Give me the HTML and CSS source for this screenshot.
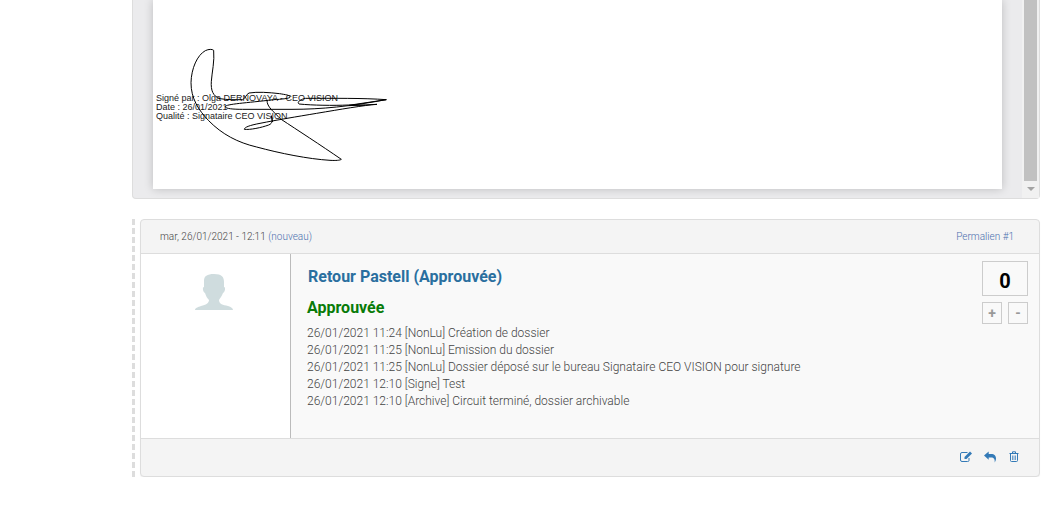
FILE: index.html
```html
<!DOCTYPE html>
<html lang="fr">
<head>
<meta charset="utf-8">
<title>Retour Pastell</title>
<link rel="stylesheet" href="styles.css">
</head>
<body>
<main class="content">
  <section class="viewer" aria-label="Document">
    <div class="stage">
      <div class="sheet">
        <div class="signed">Signé par : Olga DERNOVAYA - CEO VISION<br>Date : 26/01/2021<br>Qualité : Signataire CEO VISION</div>
        <svg class="signature" viewBox="69 45 711 360" aria-hidden="true">
          <path d="M251 61C247 57 236 57 226 62C202 75 184 115 183 158C183 205 205 240 236 272C276 313 324 338 380 351C450 370 535 387 600 391C618 392 630 391 634 388C570 344 505 302 452 267C430 244 411 231 411 211"/>
          <path d="M251 61C254 94 246 126 244 154C242 181 249 199 270 206C290 210 320 209 338 209C348 204 347 194 357 189C383 185 415 187 449 191C466 194 479 195 481 201C480 205 455 208 431 209C350 219 286 222 286 230C286 236 309 238 338 238H486C575 238 660 229 769 209C700 204 610 205 527 205C510 208 500 217 507 222C548 226 608 227 656 225L705 226"/>
          <path d="M769 209L656 226M741 223C700 226 632 238 560 250C500 260 440 270 390 280C358 286 343 292 343 298C360 300 394 293 416 285C430 280 426 268 424 257L428 276M741 223L656 227"/>
        </svg>
      </div>
    </div>
    <div class="scrollbar"><span class="thumb"></span><span class="arrow"></span></div>
  </section>

  <div class="thread">
    <article class="card">
      <header class="card-head">
        <span>mar, 26/01/2021 - 12:11 <a href="#new">(nouveau)</a></span>
        <a href="#comment-1">Permalien #1</a>
      </header>
      <div class="card-body">
        <aside class="author">
          <svg class="avatar" viewBox="0 0 38 37" role="img" aria-label="Avatar"><path d="M19 1C27 1 29 4 29 9V14C31 14 30 19 28 20C27 23 25 25 24 27C24 31 28 32 33 33C36 34 38 35 38 37H0C0 35 3 34 6 33C11 32 14 30 14 27C12 25 11 23 10 20C8 19 7 14 9 14V8C9 3 12 1 19 1Z"/></svg>
        </aside>
        <div class="message">
          <div class="text">
            <h2><a href="#comment-1">Retour Pastell (Approuvée)</a></h2>
            <h3>Approuvée</h3>
            <p>26/01/2021 11:24 [NonLu] Création de dossier<br>26/01/2021 11:25 [NonLu] Emission du dossier<br>26/01/2021 11:25 [NonLu] Dossier déposé sur le bureau Signataire CEO VISION pour signature<br>26/01/2021 12:10 [Signe] Test<br>26/01/2021 12:10 [Archive] Circuit terminé, dossier archivable</p>
          </div>
          <div class="votes">
            <output class="score">0</output>
            <button type="button">+</button>
            <button type="button">-</button>
          </div>
        </div>
      </div>
      <footer class="card-foot">
        <a href="#edit" aria-label="Modifier"><svg viewBox="0 0 12 12"><path class="line" d="M9 7V9.500Q9 10.500 7.500 10.500H2Q.5 10.500 .5 9V3Q.5 1.500 2 1.500H7.500"/><path d="M4.500 6L10 .5L12 2.500L6.500 8H4.500Z"/></svg></a>
        <a href="#reply" aria-label="Répondre"><svg viewBox="0 0 12 12"><path d="M0 4.500L4.700 .5V3H7C10.500 3 12 5 12 7.500C12 9 11.500 10 10.700 11.500C11 8 10 6.500 7 6.500H4.700V8.700Z"/></svg></a>
        <a href="#delete" aria-label="Supprimer"><svg viewBox="0 0 12 12"><path class="line" d="M1.500 2.500H10.500M4.500 2.500V.8H7.500V2.500M2.500 2.500V9.500Q2.500 10.500 3.500 10.500H8.500Q9.500 10.500 9.500 9.500V2.500"/><path class="line bars" d="M4.500 4.500V9M6 4.500V9M7.500 4.500V9"/></svg></a>
      </footer>
    </article>
  </div>
</main>
</body>
</html>
```
FILE: styles.css
```css
* { box-sizing: border-box; }
body {
  margin: 0;
  background: #fff;
  color: #444;
  font: 300 12px/17px Roboto, "Liberation Sans", sans-serif;
}
a { color: #337ab7; text-decoration: none; }
h2, h3, p { margin: 0; }

.content { margin: 0 11px 0 132px; }

.viewer {
  display: flex;
  margin-bottom: 20px;
  background: #ebebed;
  border: 1px solid #ddd;
  border-top: 0;
  border-radius: 0 0 4px 4px;
}
.stage { flex: 1; padding: 0 20px 9px; overflow: hidden; }
.sheet {
  position: relative;
  padding: 94px 0 68px 3px;
  background: #fff;
  box-shadow: 0 0 9px rgba(0, 0, 0, .2);
}
.signed {
  color: #222;
  font: 400 9px/9px "Liberation Sans", sans-serif;
}
.signature {
  position: absolute;
  left: 0;
  top: 45px;
  width: 237px;
  height: 120px;
  fill: none;
  stroke: #000;
  stroke-width: 3;
}
.scrollbar {
  display: flex;
  flex-direction: column;
  align-items: center;
  width: 17px;
  padding-bottom: 7px;
  background: #f1f1f1;
}
.thumb { flex: 1; width: 13px; margin-bottom: 6px; background: #c1c1c1; }
.arrow {
  border: 4px solid transparent;
  border-top-color: #a3a3a3;
  border-bottom: 0;
}

.thread {
  padding-left: 8px;
  background: repeating-linear-gradient(#ddd 0 6px, transparent 6px 9px) 0 0 / 3px 100% no-repeat;
}
.card {
  background: #f4f4f4;
  border: 1px solid #ddd;
  border-radius: 4px;
  box-shadow: 0 1px 1px rgba(0, 0, 0, .05);
}
.card-head {
  display: flex;
  justify-content: space-between;
  padding: 8px 25px 8px 19px;
  font-size: 10px;
}
.card-head a { color: #4a6fae; }
.card-body {
  display: flex;
  border: 1px solid #ddd;
  border-width: 1px 0;
  background: #f9f9f9;
}
.author {
  display: flex;
  justify-content: center;
  width: 150px;
  padding: 19px 4px 0 0;
  background: #fff;
  border-right: 1px solid #bbb;
}
.avatar { width: 38px; height: 37px; fill: #cfdcde; }
.message { display: flex; flex: 1; justify-content: space-between; padding: 7px 11px 28px 16px; }
.text { padding-top: 6px; }
.text h2, .text h3 { font-size: 16px; line-height: 20px; font-weight: 700; }
.text h2 { margin-bottom: 11px; padding-left: 1px; }
.text h2 a { color: #2a6f9f; }
.text h3 { margin-bottom: 7px; color: #087b08; }
.votes {
  display: grid;
  grid-template-columns: 20px 20px;
  gap: 6px;
  align-content: start;
}
.score, .votes button { border: 1px solid #ccc; background: #f9f9f9; text-align: center; }
.score {
  grid-column: 1 / 3;
  height: 35px;
  color: #000;
  font-size: 20px;
  font-weight: 700;
  line-height: 38px;
}
.votes button {
  height: 22px;
  padding: 0;
  color: #999;
  font: 700 14px/20px Roboto, sans-serif;
}
.card-foot { display: flex; justify-content: flex-end; gap: 12px; padding: 12px 19px 13px; }
.card-foot a { display: flex; }
.card-foot svg { width: 12px; height: 12px; fill: #337ab7; }
.card-foot .line { fill: none; stroke: #337ab7; stroke-width: 1; }
.card-foot .bars { stroke-width: .7; }
```
